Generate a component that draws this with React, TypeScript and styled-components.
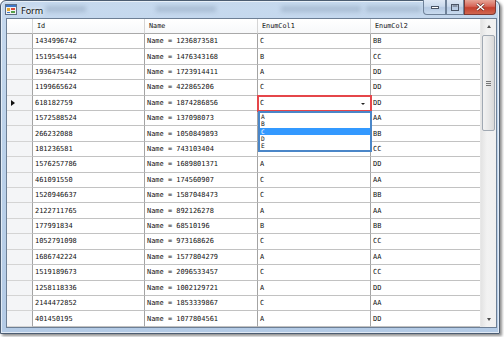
import { Fragment } from 'react';
import styled, { createGlobalStyle } from 'styled-components';

const GlobalStyle = createGlobalStyle`
  html, body {
    margin: 0;
    padding: 0;
    background: #ffffff;
  }
  body {
    width: 504px;
    height: 337px;
    overflow: hidden;
  }
`;

type Row = [string, string, string, string];

const rows: Row[] = [
  ['1434996742', 'Name = 1236873581', 'C', 'BB'],
  ['1519545444', 'Name = 1476343168', 'B', 'CC'],
  ['1936475442', 'Name = 1723914411', 'A', 'DD'],
  ['1199665624', 'Name = 422865206', 'C', 'DD'],
  ['618182759', 'Name = 1874286856', 'C', 'DD'],
  ['1572588524', 'Name = 137098073', '', 'AA'],
  ['266232088', 'Name = 1050849893', '', 'BB'],
  ['181236581', 'Name = 743103404', '', 'CC'],
  ['1576257786', 'Name = 1689801371', 'A', 'DD'],
  ['461091550', 'Name = 174560907', 'C', 'AA'],
  ['1520946637', 'Name = 1587048473', 'C', 'BB'],
  ['2122711765', 'Name = 892126278', 'A', 'AA'],
  ['177991834', 'Name = 68510196', 'B', 'BB'],
  ['1052791098', 'Name = 973168626', 'C', 'CC'],
  ['1686742224', 'Name = 1577804279', 'A', 'AA'],
  ['1519189673', 'Name = 2096533457', 'C', 'CC'],
  ['1258118336', 'Name = 1002129721', 'A', 'DD'],
  ['2144472852', 'Name = 1853339867', 'C', 'AA'],
  ['401450195', 'Name = 1077804561', 'A', 'DD'],
];

const columns = ['Id', 'Name', 'EnumCol1', 'EnumCol2'];
const options = ['A', 'B', 'C', 'D', 'E'];
const currentRow = 4;

const Window = styled.div`
  box-sizing: border-box;
  width: 500px;
  height: 334px;
  display: flex;
  flex-direction: column;
  border: 1px solid #4c5d72;
  border-radius: 6px 6px 0 0;
  padding: 0 2px 5px 5px;
  background: linear-gradient(180deg, #c6d9ee 0%, #bcd2ea 40%, #b4cbe6 100%);
  box-shadow: 2px 2px 3px rgba(0, 0, 0, 0.45), inset 0 0 0 1px rgba(255, 255, 255, 0.6);
  font-family: 'DejaVu Sans Mono', 'Liberation Mono', monospace;
`;

const TitleBar = styled.div`
  height: 17px;
  display: flex;
  align-items: center;
  position: relative;
`;

const TitleIcon = styled.svg`
  width: 12px;
  height: 11px;
  margin: 0 4px 0 -1px;
`;

const TitleText = styled.span`
  font-family: 'Noto Sans', 'Open Sans', sans-serif;
  font-size: 9px;
  color: #111;
  text-shadow: 0 0 6px #fff, 0 0 3px #fff;
  margin-top: 1px;
`;

const GhostText = styled.div<{ $left: number; $width: number }>`
  position: absolute;
  left: ${(p) => p.$left}px;
  width: ${(p) => p.$width}px;
  top: 5px;
  height: 6px;
  background: rgba(120, 140, 165, 0.35);
  filter: blur(2px);
`;

const CaptionButtons = styled.div`
  margin-left: auto;
  display: flex;
  align-self: flex-start;
  margin-top: -1px;
  margin-right: 1px;
`;

const CaptionButton = styled.div<{ $close?: boolean; $w: number }>`
  width: ${(p) => p.$w}px;
  height: 15px;
  box-sizing: border-box;
  display: flex;
  align-items: center;
  justify-content: center;
  border: 1px solid ${(p) => (p.$close ? '#7d3a35' : '#6f8299')};
  border-top: none;
  background: ${(p) =>
    p.$close
      ? 'linear-gradient(180deg, #e7a597 0%, #d7675a 45%, #c4402e 55%, #d0664f 100%)'
      : 'linear-gradient(180deg, #dfe9f5 0%, #c9d9ec 45%, #b5c9e2 55%, #c9dbef 100%)'};
  border-radius: ${(p) => (p.$close ? '0 0 4px 0' : '0')};
  &:first-child {
    border-radius: 0 0 0 4px;
  }
`;

const Client = styled.div`
  box-sizing: border-box;
  height: 310px;
  display: flex;
  border: 1px solid #6d7f95;
  background: #ffffff;
`;

const GridArea = styled.div`
  position: relative;
  display: grid;
  grid-template-columns: 26px 112px 113px 113px 110px;
  grid-template-rows: 15px repeat(19, 15.42px);
  flex: 1;
  overflow: hidden;
`;

const HeaderCell = styled.div`
  box-sizing: border-box;
  display: flex;
  align-items: center;
  padding-left: 4px;
  background: linear-gradient(180deg, #ffffff 0%, #f7f8fa 100%);
  border-right: 1px solid #d5d5d5;
  border-bottom: 1px solid #a9a9a9;
  font-size: 6.8px;
  color: #111;
  white-space: nowrap;
`;

const RowHeader = styled.div`
  box-sizing: border-box;
  display: flex;
  align-items: center;
  padding-left: 4px;
  background: #f4f5f7;
  border-right: 1px solid #a4a4a4;
  border-bottom: 1px solid #d4d4d4;
`;

const Arrow = styled.span`
  width: 0;
  height: 0;
  border-top: 3px solid transparent;
  border-bottom: 3px solid transparent;
  border-left: 4px solid #111;
`;

const Cell = styled.div<{ $editing?: boolean }>`
  box-sizing: border-box;
  position: relative;
  display: flex;
  align-items: center;
  padding-left: 2px;
  border-right: 1px solid #a4a4a4;
  border-bottom: 1px solid #c2c2c2;
  font-size: 6.95px;
  color: #111;
  white-space: nowrap;
  overflow: hidden;
  ${(p) =>
    p.$editing &&
    `
    outline: 2px solid #e5464a;
    outline-offset: -1px;
    z-index: 2;
    overflow: visible;
  `}
`;

const ComboArrow = styled.span`
  position: absolute;
  right: 5px;
  top: 7px;
  width: 0;
  height: 0;
  border-left: 2px solid transparent;
  border-right: 2px solid transparent;
  border-top: 2px solid #222;
`;

const DropList = styled.div`
  position: absolute;
  left: 251px;
  top: 92px;
  width: 114px;
  height: 41px;
  box-sizing: border-box;
  border: 2px solid #4a86c8;
  background: #ffffff;
  display: flex;
  flex-direction: column;
  z-index: 3;
`;

const DropItem = styled.div<{ $selected?: boolean }>`
  flex: 1;
  min-height: 0;
  display: flex;
  align-items: center;
  padding-left: 1px;
  font-size: 6.2px;
  line-height: 6px;
  overflow: hidden;
  color: ${(p) => (p.$selected ? '#ffffff' : '#111')};
  background: ${(p) => (p.$selected ? '#3399ff' : 'transparent')};
`;

const ScrollBar = styled.div`
  width: 15px;
  display: flex;
  flex-direction: column;
  background: linear-gradient(90deg, #e3e3e3 0%, #f2f2f2 40%, #f0f0f0 100%);
  border-left: 1px solid #e8e8e8;
`;

const ScrollButton = styled.div`
  height: 15px;
  display: flex;
  align-items: center;
  justify-content: center;
`;

const ScrollTriangle = styled.span<{ $up?: boolean }>`
  width: 0;
  height: 0;
  border-left: 2.5px solid transparent;
  border-right: 2.5px solid transparent;
  ${(p) => (p.$up ? 'border-bottom: 3px solid #4d4d4d;' : 'border-top: 3px solid #4d4d4d;')}
`;

const Track = styled.div`
  flex: 1;
  display: flex;
  flex-direction: column;
`;

const Thumb = styled.div`
  margin: 1px 1px 0 1px;
  height: 96px;
  box-sizing: border-box;
  border: 1px solid #a1a9b3;
  border-radius: 2px;
  background: linear-gradient(90deg, #f3f3f3 0%, #e8e8e8 50%, #d9d9d9 100%);
  display: flex;
  align-items: center;
  justify-content: center;
`;

const Grip = styled.div`
  width: 5px;
  height: 5px;
  background: repeating-linear-gradient(180deg, #777 0px, #777 1px, transparent 1px, transparent 2px);
`;

function FormIcon() {
  return (
    <TitleIcon viewBox="0 0 12 11">
      <rect x="0.5" y="0.5" width="11" height="10" fill="#f2f2f2" stroke="#5f6f86" />
      <rect x="1" y="1" width="10" height="2" fill="#3d78c9" />
      <rect x="2" y="4" width="3" height="3" fill="#e7a82c" />
      <rect x="6" y="4" width="4" height="2" fill="#d94b3c" />
      <rect x="6" y="7" width="4" height="2" fill="#55a04a" />
      <rect x="2" y="8" width="3" height="1" fill="#3d78c9" />
    </TitleIcon>
  );
}

export default function App() {
  return (
    <>
      <GlobalStyle />
      <Window>
        <TitleBar>
          <FormIcon />
          <TitleText>Form</TitleText>
          <GhostText $left={40} $width={40} />
          <GhostText $left={150} $width={60} />
          <GhostText $left={275} $width={80} />
          <GhostText $left={360} $width={55} />
          <CaptionButtons>
            <CaptionButton $w={23}>
              <svg width="8" height="3" viewBox="0 0 8 3">
                <rect x="0.5" y="0.5" width="7" height="2" fill="#fff" stroke="#4a5566" />
              </svg>
            </CaptionButton>
            <CaptionButton $w={18}>
              <svg width="8" height="7" viewBox="0 0 8 7">
                <rect x="0.5" y="0.5" width="7" height="6" fill="none" stroke="#4a5566" />
                <rect x="1.5" y="1.5" width="5" height="1" fill="#4a5566" />
              </svg>
            </CaptionButton>
            <CaptionButton $w={32} $close>
              <svg width="9" height="8" viewBox="0 0 9 8">
                <path d="M1 1 L8 7 M8 1 L1 7" stroke="#5a1f18" strokeWidth="2.6" />
                <path d="M1 1 L8 7 M8 1 L1 7" stroke="#ffffff" strokeWidth="1.6" />
              </svg>
            </CaptionButton>
          </CaptionButtons>
        </TitleBar>
        <Client>
          <GridArea>
            <HeaderCell />
            {columns.map((c) => (
              <HeaderCell key={c}>{c}</HeaderCell>
            ))}
            {rows.map((r, i) => (
              <Fragment key={r[0]}>
                <RowHeader>{i === currentRow && <Arrow />}</RowHeader>
                <Cell>{r[0]}</Cell>
                <Cell>{r[1]}</Cell>
                <Cell $editing={i === currentRow}>
                  {r[2]}
                  {i === currentRow && <ComboArrow />}
                </Cell>
                <Cell>{r[3]}</Cell>
              </Fragment>
            ))}
            <DropList>
              {options.map((o) => (
                <DropItem key={o} $selected={o === 'C'}>
                  {o}
                </DropItem>
              ))}
            </DropList>
          </GridArea>
          <ScrollBar>
            <ScrollButton>
              <ScrollTriangle $up />
            </ScrollButton>
            <Track>
              <Thumb>
                <Grip />
              </Thumb>
            </Track>
            <ScrollButton>
              <ScrollTriangle />
            </ScrollButton>
          </ScrollBar>
        </Client>
      </Window>
    </>
  );
}
